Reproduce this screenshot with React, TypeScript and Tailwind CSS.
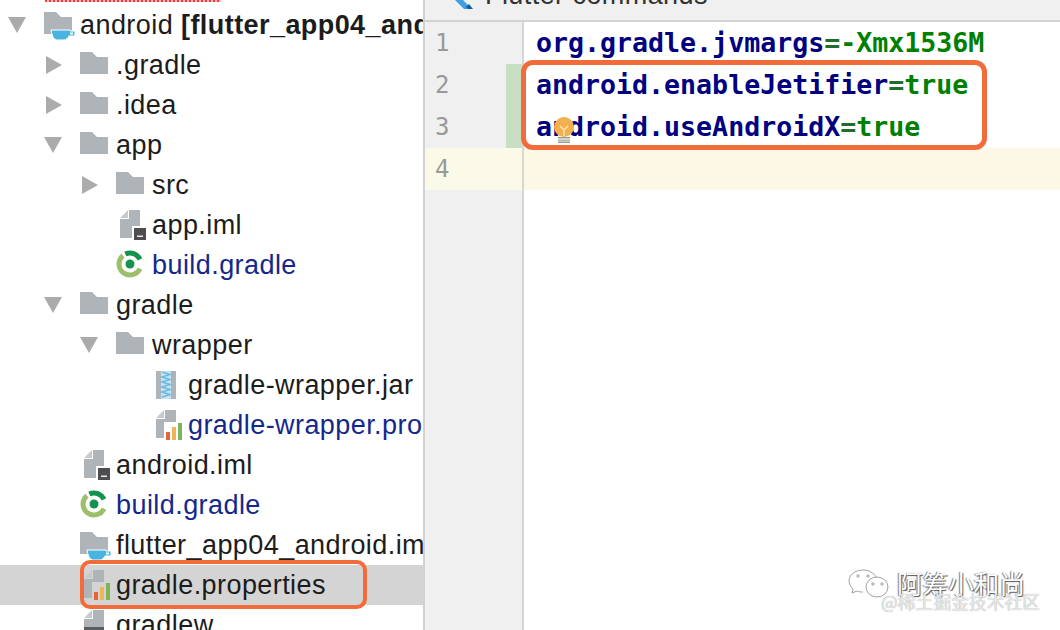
import * as React from "react"

type IconKind = "module" | "folder" | "iml" | "gradle" | "jar" | "props" | "mug" | "script"

function Arrow({ open }: { open: boolean }) {
  return open ? (
    <svg width="18" height="16" viewBox="0 0 18 16">
      <path d="M0 0H18L9 16Z" fill="#ababab" />
    </svg>
  ) : (
    <svg width="16" height="18" viewBox="0 0 16 18" className="ml-[2px]">
      <path d="M0 0L16 9L0 18Z" fill="#ababab" />
    </svg>
  )
}

function Fold() {
  return <path d="M0 8L8 0V8Z" fill="#c6cacd" />
}

function TreeIcon({ kind }: { kind: IconKind }) {
  if (kind === "folder") {
    return (
      <svg width="28" height="22" viewBox="0 0 28 22" className="mt-[-4px]">
        <path d="M0 0H12L17 5H28V22H0Z" fill="#afb4b9" />
      </svg>
    )
  }
  if (kind === "module" || kind === "mug") {
    return (
      <svg width="32" height="30" viewBox="0 0 32 30" className="overflow-visible">
        <path d="M0 2H12L17 7H28V24H0Z" fill="#afb4b9" />
        <path d="M7 20H26V21H31V26H25C24 28 22 30 20 30H13C10 30 8 26 7 20Z" fill="#48b5e0" stroke="#fff" strokeWidth="1" />
        <rect x="26" y="22.5" width="3" height="2" fill="#fff" />
      </svg>
    )
  }
  if (kind === "iml") {
    return (
      <svg width="26" height="30" viewBox="0 0 26 30" className="ml-[4px]">
        <path d="M9 0H20V16H12V28H0V9H9Z" fill="#afb4b9" />
        <Fold />
        <rect x="14" y="18" width="12" height="12" fill="#4d4d4f" />
        <rect x="17" y="25.5" width="6" height="1.5" fill="#e8e8e8" />
      </svg>
    )
  }
  if (kind === "script") {
    return (
      <svg width="26" height="30" viewBox="0 0 26 30" className="ml-[4px]">
        <path d="M9 0H20V28H0V9H9Z" fill="#afb4b9" />
        <Fold />
        <rect x="0" y="17" width="20" height="13" fill="#5a5d60" />
        <rect x="3" y="21" width="14" height="1.5" fill="#e8e8e8" />
        <rect x="3" y="25" width="14" height="1.5" fill="#e8e8e8" />
      </svg>
    )
  }
  if (kind === "gradle") {
    return (
      <svg width="28" height="28" viewBox="0 0 28 28" className="mt-[-2px]">
        <path d="M9.35 4.03A11 11 0 0 1 23.97 9.35" fill="none" stroke="#16924f" strokeWidth="5" />
        <path d="M23.97 18.65A11 11 0 1 1 6.93 5.57" fill="none" stroke="#9dbf6a" strokeWidth="5" />
        <circle cx="14" cy="14" r="4.5" fill="#16924f" />
      </svg>
    )
  }
  if (kind === "jar") {
    return (
      <svg width="20" height="28" viewBox="0 0 20 28" className="ml-[4px]">
        <rect width="20" height="28" fill="#afb4b9" />
        <rect x="5" width="10" height="28" fill="#c4e3f2" />
        <path d="M6 1L14 3.5L6 6L14 8.5L6 11L14 13.5L6 16L14 18.5L6 21L14 23.5L6 26" fill="none" stroke="#6db8e0" strokeWidth="1.5" />
      </svg>
    )
  }
  return (
    <svg width="26" height="30" viewBox="0 0 26 30" className="ml-[4px]">
      <path d="M9 0H20V12H8V28H0V9H9Z" fill="#afb4b9" />
      <Fold />
      <rect x="10" y="22" width="4" height="8" fill="#e4643c" />
      <rect x="16" y="17" width="4" height="13" fill="#edb458" />
      <rect x="22" y="13" width="4" height="17" fill="#7fb55a" />
    </svg>
  )
}

type Row = {
  level: number
  label: React.ReactNode
  icon: IconKind
  arrow?: "open" | "closed"
  blue?: boolean
  selected?: boolean
}

const rows: Row[] = [
  {
    level: 0,
    icon: "module",
    arrow: "open",
    label: (
      <>
        android <span className="font-bold">[flutter_app04_android]</span>
      </>
    ),
  },
  { level: 1, icon: "folder", arrow: "closed", label: ".gradle" },
  { level: 1, icon: "folder", arrow: "closed", label: ".idea" },
  { level: 1, icon: "folder", arrow: "open", label: "app" },
  { level: 2, icon: "folder", arrow: "closed", label: "src" },
  { level: 2, icon: "iml", label: "app.iml" },
  { level: 2, icon: "gradle", label: "build.gradle", blue: true },
  { level: 1, icon: "folder", arrow: "open", label: "gradle" },
  { level: 2, icon: "folder", arrow: "open", label: "wrapper" },
  { level: 3, icon: "jar", label: "gradle-wrapper.jar" },
  { level: 3, icon: "props", label: "gradle-wrapper.properties", blue: true },
  { level: 1, icon: "iml", label: "android.iml" },
  { level: 1, icon: "gradle", label: "build.gradle", blue: true },
  { level: 1, icon: "mug", label: "flutter_app04_android.iml" },
  { level: 1, icon: "props", label: "gradle.properties", selected: true },
  { level: 1, icon: "script", label: "gradlew" },
]

const indent: Record<number, string> = {
  0: "pl-[8px]",
  1: "pl-[44px]",
  2: "pl-[80px]",
  3: "pl-[116px]",
}

function TreeRow({ row }: { row: Row }) {
  return (
    <div
      className={`relative flex h-[40px] items-center whitespace-nowrap ${indent[row.level]} ${
        row.selected ? "bg-[#d4d4d4]" : ""
      }`}
    >
      <div className="flex w-[36px] shrink-0 items-center">
        {row.arrow && <Arrow open={row.arrow === "open"} />}
      </div>
      <div className="flex w-[36px] shrink-0 items-center">
        <TreeIcon kind={row.icon} />
      </div>
      <span className={row.blue ? "text-[#14288c]" : "text-[#1c1c1c]"}>{row.label}</span>
      {row.selected && (
        <div className="absolute left-[80px] top-[-5px] h-[49px] w-[287px] rounded-[10px] border-4 border-[#f26b3a]" />
      )}
    </div>
  )
}

function Bulb() {
  return (
    <svg width="22" height="26" viewBox="0 0 22 26" className="absolute left-[29px] top-[95px]">
      <circle cx="11" cy="10" r="10" fill="#f2b04f" />
      <path d="M7 9L11 13L15 9M11 13V19" fill="none" stroke="#fbe3ad" strokeWidth="1.5" />
      <rect x="5" y="20" width="12" height="1.5" fill="#9a9a90" />
      <rect x="5" y="22.5" width="12" height="1.5" fill="#b5b5ab" />
      <rect x="5" y="24.5" width="12" height="1.5" fill="#9a9a90" />
    </svg>
  )
}

function Code({ name, value }: { name: string; value: string }) {
  return (
    <div className="h-[42px] whitespace-nowrap pl-[12px] leading-[42px]">
      <span className="text-[#000080]">{name}</span>
      <span className="text-[#1f6e2a]">=</span>
      <span className="text-[#008000]">{value}</span>
    </div>
  )
}

function WeChat() {
  return (
    <svg width="44" height="32" viewBox="0 0 44 32" fill="none" stroke="#8a8a8a" strokeWidth="0.8">
      <path d="M15 1C7 1 1 6 1 12C1 15 3 18 5 20L4 24L9 22C11 23 13 23 15 23" />
      <path d="M15 1C21 1 26 4 28 8" />
      <ellipse cx="29" cy="18" rx="11" ry="10" fill="#fff" />
      <circle cx="10" cy="7" r="1.2" />
      <circle cx="20" cy="7" r="1.2" />
      <circle cx="25" cy="15" r="1.2" />
      <circle cx="34" cy="15" r="1.2" />
    </svg>
  )
}

export default function App() {
  return (
    <div className="relative flex h-[630px] w-[1060px] overflow-hidden bg-white font-['Liberation_Sans',sans-serif] text-[27px] tracking-[0.43px]">
      {/* project tree */}
      <div className="relative w-[423px] shrink-0 overflow-hidden pt-[5px]">
        <div className="absolute left-[45px] top-0 h-[2px] w-[176px] bg-[repeating-linear-gradient(90deg,#ef3b3b_0,#ef3b3b_2px,#f9b9b9_2px,#f9b9b9_4px)]" />
        {rows.map((row, i) => (
          <TreeRow key={i} row={row} />
        ))}
      </div>
      <div className="w-[2px] shrink-0 bg-[#d2d2d2]" />

      {/* editor */}
      <div className="flex min-w-0 flex-1 flex-col tracking-normal">
        <div className="flex h-[20px] shrink-0 items-start overflow-hidden bg-[#f0f0f0] pl-[30px] leading-[30px] text-[#333]">
          <svg width="18" height="9" viewBox="0 0 18 9" className="mr-[12px] shrink-0">
            <path d="M0 0H8L15 7L13 9H9Z" fill="#3f9fe0" />
            <path d="M11 7L14 4L18 9H13Z" fill="#0d5fa8" />
          </svg>
          <span className="mt-[-20px] tracking-[0.43px]">Flutter commands</span>
        </div>
        <div className="h-[2px] shrink-0 bg-[#d2d2d2]" />
        <div className="flex flex-1">
          <div className="w-[99px] shrink-0 border-r-2 border-[#d6d6d6] bg-[#f0f0f0] font-['DejaVu_Sans_Mono',monospace] text-[24px] text-[#999]">
            {[1, 2, 3, 4].map((n) => (
              <div
                key={n}
                className={`relative h-[42px] pl-[10px] leading-[42px] ${n === 4 ? "bg-[#fbf9e8]" : ""}`}
              >
                {n}
                {(n === 2 || n === 3) && (
                  <div className="absolute right-0 top-0 h-[42px] w-[16px] bg-[#c9dfc3]" />
                )}
              </div>
            ))}
          </div>
          <div className="relative min-w-0 flex-1 font-['DejaVu_Sans_Mono',monospace] text-[26.6px] font-bold">
            <Code name="org.gradle.jvmargs" value="-Xmx1536M" />
            <Code name="android.enableJetifier" value="true" />
            <Code name="android.useAndroidX" value="true" />
            <div className="h-[42px] bg-[#fdf8e6]" />
            <Bulb />
            <div className="absolute left-[-3px] top-[38px] h-[90px] w-[466px] rounded-[12px] border-[5px] border-[#f26b3a]" />
          </div>
        </div>
      </div>

      {/* watermark */}
      <div className="absolute left-[848px] top-[569px]">
        <WeChat />
      </div>
      <div className="absolute left-[897px] top-[566px] whitespace-nowrap font-['Noto_Sans_CJK_SC',sans-serif] text-[25.6px] leading-[34px] tracking-normal text-white [text-shadow:1px_1px_1px_#555,-1px_0_1px_#777]">
        阿筹小和尚
      </div>
      <div className="absolute left-[881px] top-[589px] whitespace-nowrap font-['Noto_Sans_CJK_SC',sans-serif] text-[17.8px] leading-[24px] tracking-normal text-[#e8e8e8] [text-shadow:0_0_1px_#999]">
        @稀土掘金技术社区
      </div>
    </div>
  )
}
